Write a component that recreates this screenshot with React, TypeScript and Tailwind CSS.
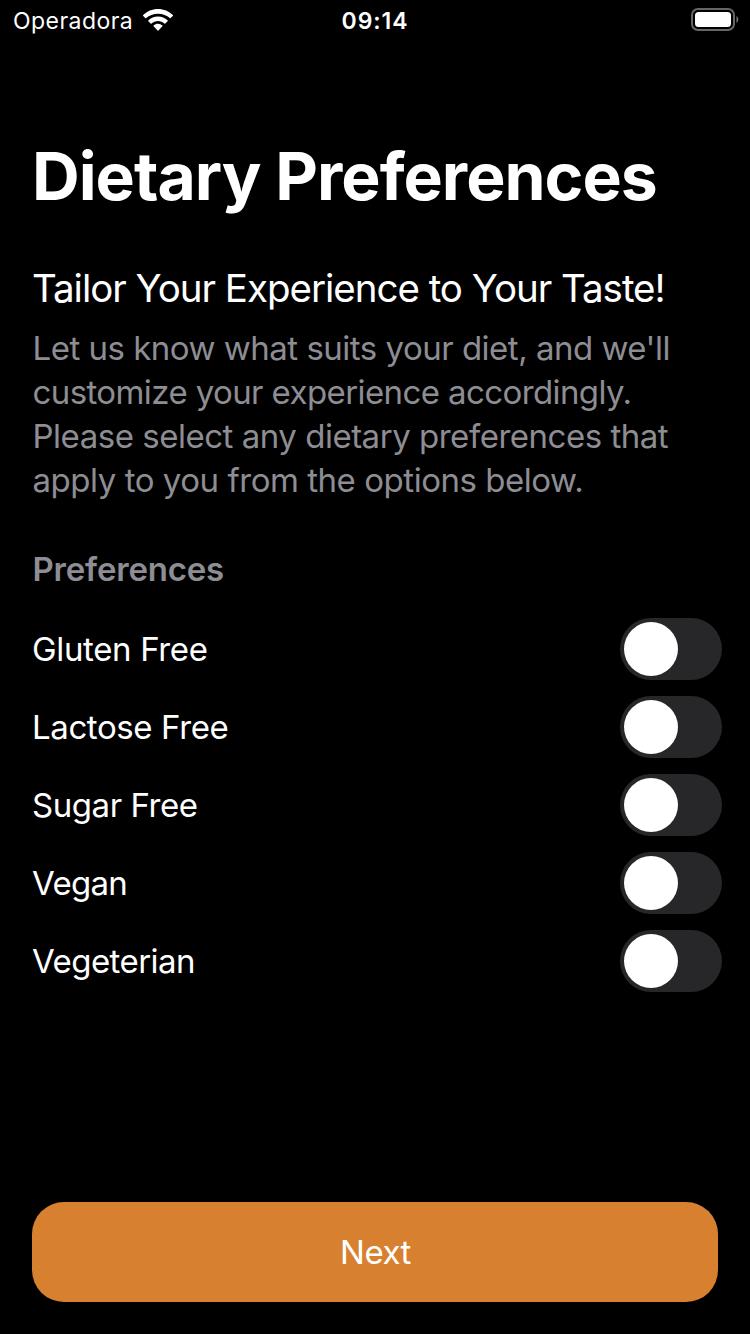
import React from "react";

const options = [
  { name: "Gluten Free", spacing: "tracking-[-0.35px]" },
  { name: "Lactose Free", spacing: "tracking-[-0.4px]" },
  { name: "Sugar Free", spacing: "tracking-[-0.45px]" },
  { name: "Vegan", spacing: "tracking-[-0.7px]" },
  { name: "Vegeterian", spacing: "tracking-[-0.55px]" },
];

const intro = [
  { text: "Let us know what suits your diet, and we'll", spacing: "tracking-[-0.5px]" },
  { text: "customize your experience accordingly.", spacing: "tracking-[-0.6px]" },
  { text: "Please select any dietary preferences that", spacing: "tracking-[-0.48px]" },
  { text: "apply to you from the options below.", spacing: "tracking-[-0.46px]" },
];

function Wifi() {
  return (
    <svg width="30" height="22" viewBox="0 0 30 22" fill="white">
      <path d="M15 0C9.2 0 4 2.3.2 6.1c-.3.3-.3.6 0 .9l2.1 2.1c.3.3.6.3.9 0C6.2 6.4 10.4 4.7 15 4.7s8.800 1.700 11.800 4.400c.3.3.6.3.9 0L29.800 7c.3-.3.3-.6 0-.9C26 2.300 20.800 0 15 0z" />
      <path d="M15 7.400c-3.700 0-7.100 1.500-9.600 3.900-.3.3-.3.6 0 .9l2.300 2.300c.3.3.6.3.9 0 1.700-1.500 4-2.400 6.400-2.400s4.700.9 6.400 2.400c.3.3.6.3.9 0l2.300-2.300c.3-.3.3-.6 0-.9A13.800 13.800 0 0 0 15 7.400z" />
      <path d="M15 14.800c-1.700 0-3.200.6-4.400 1.600-.3.3-.3.6 0 .9l4 4.200c.3.3.6.3.9 0l3.900-4.200c.3-.3.3-.6 0-.9A6.800 6.800 0 0 0 15 14.800z" />
    </svg>
  );
}

function Battery() {
  return (
    <svg width="48" height="24" viewBox="0 0 48 24" fill="none">
      <rect x="1" y="1" width="42" height="21" rx="6" stroke="#666" strokeWidth="2" />
      <rect x="4" y="4" width="36" height="15" rx="3.5" fill="white" />
      <path d="M45.500 8c2.300 1.500 2.300 5.500 0 7z" fill="#777" />
    </svg>
  );
}

export default function App() {
  return (
    <main className="flex h-[1334px] w-[750px] flex-col bg-black font-['Inter',sans-serif] text-white">
      <header className="grid h-10 grid-cols-3 items-center pl-[13px] pr-[11px] text-[23px]">
        <div className="flex items-center gap-[10px]">
          <span className="whitespace-nowrap pt-0.5 tracking-[0.45px]">Operadora</span>
          <Wifi />
        </div>
        <span className="pr-[2px] pt-0.5 text-center font-semibold tracking-[0.9px]">09:14</span>
        <div className="flex justify-end"><Battery /></div>
      </header>
      <section className="flex flex-col px-8 pt-24">
        <h1 className="h-[80px] whitespace-nowrap text-[66px] font-bold leading-[80px] tracking-[-0.97px]">Dietary Preferences</h1>
        <h2 className="mt-12 h-12 whitespace-nowrap text-[38.5px] leading-[48px] tracking-[-1.02px]">Tailor Your Experience to Your Taste!</h2>
        <p className="mt-[14px] flex flex-col whitespace-nowrap pl-[0.5px] text-[33px] leading-[44px] text-[#8d8d93]">
          {intro.map((line) => <span key={line.text} className={line.spacing}>{line.text}</span>)}
        </p>
        <h3 className="mt-[45px] h-[44px] pl-[0.5px] text-[33px] font-semibold leading-[44px] tracking-[-0.2px] text-[#8d8d93]">Preferences</h3>
      </section>
      <section className="mt-[27px] flex flex-col gap-4 pl-8 pr-7">
        {options.map((o) => (
          <label key={o.name} className="flex h-[62px] items-center justify-between text-[33px]">
            <span className={`pt-0.5 ${o.spacing}`}>{o.name}</span>
            <span role="switch" aria-checked="false" className="flex h-[62px] w-[102px] items-center rounded-full bg-[#272729] px-1">
              <span className="size-[54px] rounded-full bg-white" />
            </span>
          </label>
        ))}
      </section>
      <button className="mx-8 mb-8 mt-auto h-[100px] rounded-[32px] bg-[#d78130] pl-px pt-0.5 text-[33px] tracking-[-0.5px]">Next</button>
    </main>
  );
}
